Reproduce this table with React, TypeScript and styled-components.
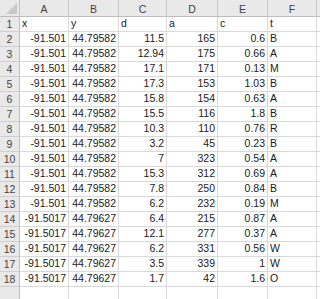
import { Fragment } from "react";
import styled, { createGlobalStyle } from "styled-components";

const GlobalStyle = createGlobalStyle`
  html, body {
    margin: 0;
    padding: 0;
    background: #ffffff;
  }
  body {
    font-family: "Liberation Sans", Arial, sans-serif;
  }
`;

const Sheet = styled.div`
  display: grid;
  grid-template-columns: 20px 49px 50px 48px 51px 50px 49px 1fr;
  grid-auto-rows: 15px;
  grid-template-rows: 17px;
  width: 320px;
  height: 299px;
  overflow: hidden;
  font-size: 10.5px;
  color: #1a1a1a;
`;

const Corner = styled.div`
  position: relative;
  background: #e9e9e9;
  border-right: 1px solid #c3c3c3;
  border-bottom: 1px solid #bdbdbd;
  box-sizing: border-box;
  &::after {
    content: "";
    position: absolute;
    right: 2px;
    bottom: 2px;
    width: 0;
    height: 0;
    border-left: 11px solid transparent;
    border-bottom: 11px solid #c8c8c8;
  }
`;

const ColHead = styled.div`
  display: flex;
  align-items: center;
  justify-content: center;
  background: #e9e9e9;
  border-right: 1px solid #c8c8c8;
  border-bottom: 1px solid #bdbdbd;
  box-sizing: border-box;
  color: #444;
  padding-top: 1px;
`;

const RowHead = styled.div`
  display: flex;
  align-items: center;
  justify-content: center;
  background: #e9e9e9;
  border-right: 1px solid #bdbdbd;
  border-bottom: 1px solid #cfcfcf;
  box-sizing: border-box;
  color: #444;
`;

const Cell = styled.div<{ $num?: boolean }>`
  display: flex;
  align-items: flex-end;
  justify-content: ${(p) => (p.$num ? "flex-end" : "flex-start")};
  padding: 0 2px 1px 2px;
  border-right: 1px solid #d9d9d9;
  border-bottom: 1px solid #d9d9d9;
  box-sizing: border-box;
  white-space: nowrap;
  overflow: hidden;
  line-height: 13px;
`;

const cols = ["A", "B", "C", "D", "E", "F", ""];

const rows: (string | number)[][] = [
  ["x", "y", "d", "a", "c", "t"],
  [-91.501, 44.79582, 11.5, 165, 0.6, "B"],
  [-91.501, 44.79582, 12.94, 175, 0.66, "A"],
  [-91.501, 44.79582, 17.1, 171, 0.13, "M"],
  [-91.501, 44.79582, 17.3, 153, 1.03, "B"],
  [-91.501, 44.79582, 15.8, 154, 0.63, "A"],
  [-91.501, 44.79582, 15.5, 116, 1.8, "B"],
  [-91.501, 44.79582, 10.3, 110, 0.76, "R"],
  [-91.501, 44.79582, 3.2, 45, 0.23, "B"],
  [-91.501, 44.79582, 7, 323, 0.54, "A"],
  [-91.501, 44.79582, 15.3, 312, 0.69, "A"],
  [-91.501, 44.79582, 7.8, 250, 0.84, "B"],
  [-91.501, 44.79582, 6.2, 232, 0.19, "M"],
  [-91.5017, 44.79627, 6.4, 215, 0.87, "A"],
  [-91.5017, 44.79627, 12.1, 277, 0.37, "A"],
  [-91.5017, 44.79627, 6.2, 331, 0.56, "W"],
  [-91.5017, 44.79627, 3.5, 339, 1, "W"],
  [-91.5017, 44.79627, 1.7, 42, 1.6, "O"],
  ["", "", "", "", "", ""],
];

export default function App() {
  return (
    <>
      <GlobalStyle />
      <Sheet>
        <Corner />
        {cols.map((c, i) => (
          <ColHead key={"h" + i}>{c}</ColHead>
        ))}
        {rows.map((row, r) => (
          <Fragment key={"r" + r}>
            <RowHead>{r < 18 ? r + 1 : ""}</RowHead>
            {row.map((v, c) => (
              <Cell key={c} $num={typeof v === "number"}>
                {String(v)}
              </Cell>
            ))}
            <Cell />
          </Fragment>
        ))}
      </Sheet>
    </>
  );
}
